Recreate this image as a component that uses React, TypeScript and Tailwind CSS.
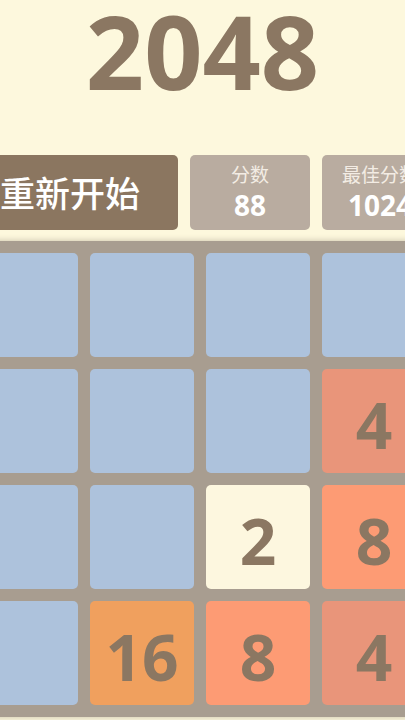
import type { FC } from 'react';

type Tile = number | null;

const board: Tile[][] = [
  [null, null, null, null],
  [null, null, null, 4],
  [null, null, 2, 8],
  [null, 16, 8, 4],
];

const tileClass = (value: Tile) => {
  switch (value) {
    case 2:
      return 'bg-[#fdf7df]';
    case 4:
      return 'bg-[#e9957a]';
    case 8:
      return 'bg-[#fd9b74]';
    case 16:
      return 'bg-[#f0a05e]';
    default:
      return 'bg-[#adc2dc]';
  }
};

const ScoreBox: FC<{ label: string; value: number; width: string }> = ({ label, value, width }) => (
  <div className={`${width} flex shrink-0 flex-col items-center rounded-[5px] bg-[#b9aca0] pt-[7px]`}>
    <span className="text-[19px] leading-[24px] text-[#f3ece4]">{label}</span>
    <span className="mt-[2px] font-['Open_Sans',sans-serif] text-[28px] font-bold leading-[34px] text-white">
      {value}
    </span>
  </div>
);

const App: FC = () => {
  return (
    <div className="flex min-h-screen flex-col items-center overflow-hidden bg-[#fdf8dd] font-['Noto_Sans_CJK_SC',sans-serif]">
      <h1 className="font-['Open_Sans',sans-serif] text-[102px] font-bold leading-none text-[#8b7762]">2048</h1>

      <div className="mr-[5px] mt-[53px] w-[476px] shrink-0">
        <div className="flex h-[75px] gap-3">
          <button
            type="button"
            className="flex w-[216px] shrink-0 items-center justify-center rounded-[5px] bg-[#8b7660] text-[35px] font-medium text-white"
          >
            重新开始
          </button>
          <ScoreBox label="分数" value={88} width="w-[120px]" />
          <ScoreBox label="最佳分数" value={1024} width="w-[116px]" />
        </div>

        <div className="mt-[11px] grid grid-cols-4 gap-3 rounded-[6px] bg-[#a89d90] p-3 shadow-[0_0_6px_rgba(120,105,90,0.4)]">
          {board.flat().map((value, i) => (
            <div
              key={i}
              className={`flex h-[104px] items-center justify-center rounded-[5px] pt-[8px] font-['Open_Sans',sans-serif] text-[64px] font-bold leading-none text-[#8b7762] ${tileClass(value)}`}
            >
              {value ?? ''}
            </div>
          ))}
        </div>
      </div>
    </div>
  );
};

export default App;
